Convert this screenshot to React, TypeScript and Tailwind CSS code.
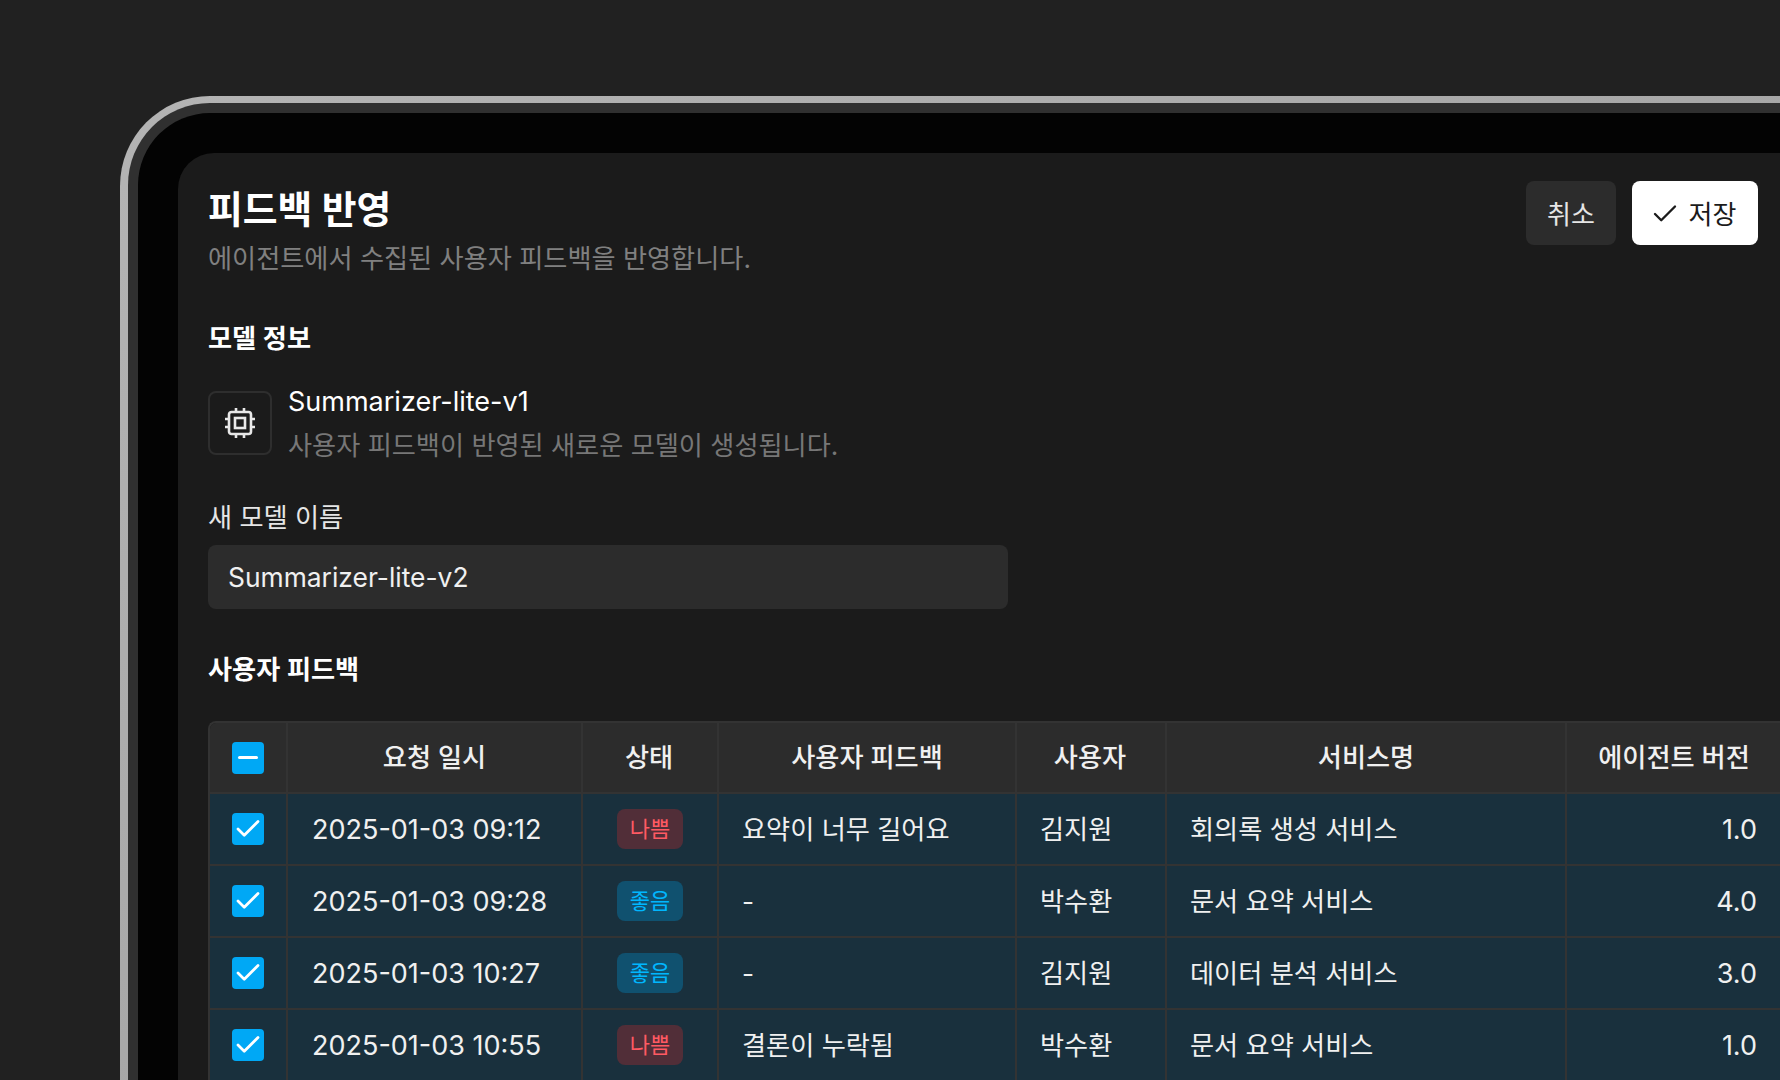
import { Check } from "lucide-react";

const rows = [
  { date: "2025-01-03 09:12", bad: true, feedback: "요약이 너무 길어요", user: "김지원", service: "회의록 생성 서비스", version: "1.0" },
  { date: "2025-01-03 09:28", bad: false, feedback: "-", user: "박수환", service: "문서 요약 서비스", version: "4.0" },
  { date: "2025-01-03 10:27", bad: false, feedback: "-", user: "김지원", service: "데이터 분석 서비스", version: "3.0" },
  { date: "2025-01-03 10:55", bad: true, feedback: "결론이 누락됨", user: "박수환", service: "문서 요약 서비스", version: "1.0" },
];

function Box({ minus }: { minus?: boolean }) {
  return (
    <div className="w-8 h-8 rounded-[4px] bg-[#00a8f5] flex items-center justify-center">
      {minus ? (
        <div className="w-[20px] h-[3px] bg-white rounded-full" />
      ) : (
        <Check className="w-[30px] h-[30px] text-white" strokeWidth={2.2} />
      )}
    </div>
  );
}

function ChipIcon() {
  return (
    <svg viewBox="0 0 32 32" className="w-8 h-8 text-[#e8e8e8]" fill="none" stroke="currentColor" strokeWidth={2.6}>
      <rect x="5" y="5" width="22" height="22" rx="2.5" />
      <rect x="11" y="11" width="10" height="10" />
      <path d="M12 1v4M20 1v4M12 27v4M20 27v4M1 12h4M1 20h4M27 12h4M27 20h4" />
    </svg>
  );
}

export default function App() {
  return (
    <div className="w-[1780px] h-[1080px] overflow-hidden bg-[#212121] pl-[120px] pt-[96px] font-['Inter','Noto_Sans_CJK_KR',sans-serif]">
      {/* device frame */}
      <div className="w-[1720px] h-[1040px] rounded-tl-[90px] bg-linear-to-br from-[#b4b4b4] to-[#9a9a9a] pl-[8px] pt-[7px]">
        <div className="w-full h-full rounded-tl-[82px] bg-[#303030] pl-[10px] pt-[10px]">
          <div className="w-full h-full rounded-tl-[72px] bg-[#030303] pl-[40px] pt-[40px]">
            <div className="w-full h-full rounded-tl-[36px] bg-[#1b1b1b] pl-[30px] pt-[32px] flex flex-col">
              <div className="flex items-start justify-between w-[1550px]">
                <div>
                  <h1 className="text-[37.8px] leading-[48px] font-semibold text-white">피드백 반영</h1>
                  <p className="mt-[7px] text-[26.2px] leading-[38px] text-[#808080]">에이전트에서 수집된 사용자 피드백을 반영합니다.</p>
                </div>
                <div className="flex gap-4 mt-[-4px]">
                  <button className="h-16 w-[90px] pt-[2px] rounded-lg bg-[#2c2c2c] text-[26px] text-[#e6e6e6]">취소</button>
                  <button className="h-16 w-[126px] pt-[2px] pr-[4px] rounded-lg bg-white text-[26px] text-[#1b1b1b] flex items-center justify-center gap-[9px]">
                    <Check className="w-[30px] h-[30px]" strokeWidth={1.9} />
                    저장
                  </button>
                </div>
              </div>

              <h2 className="mt-[43px] text-[26.2px] leading-[36px] font-semibold text-white">모델 정보</h2>
              <div className="mt-[26px] flex items-center gap-4">
                <div className="w-16 h-16 rounded-lg border-2 border-[#2e2e2e] flex items-center justify-center">
                  <ChipIcon />
                </div>
                <div className="pt-[1px] -mb-[1px]">
                  <div className="text-[27px] leading-[36px] text-white">Summarizer-lite-v1</div>
                  <div className="mt-[7px] text-[26.2px] leading-[37px] text-[#777777]">사용자 피드백이 반영된 새로운 모델이 생성됩니다.</div>
                </div>
              </div>

              <label className="mt-[37px] text-[26.2px] leading-[36px] text-[#e6e6e6]">새 모델 이름</label>
              <div className="mt-[9px] w-[800px] h-16 rounded-lg bg-[#2c2c2c] px-5 pt-[2px] flex items-center text-[26.4px] text-[#f0f0f0]">Summarizer-lite-v2</div>

              <h2 className="mt-[43px] text-[26.2px] leading-[36px] font-semibold text-white">사용자 피드백</h2>

              <div className="mt-[33px] w-[1600px] border-2 border-r-0 border-b-0 border-[#333333] rounded-tl-lg overflow-hidden">
                <div className="flex h-[71px] bg-[#2c2c2c] text-[26.2px] font-medium text-[#f0f0f0] border-b-2 border-[#333333]">
                  <div className="w-[78px] flex items-center justify-center border-r-2 border-[#333333]"><Box minus /></div>
                  <div className="w-[295px] flex items-center justify-center border-r-2 border-[#333333]">요청 일시</div>
                  <div className="w-[136px] pr-[2px] flex items-center justify-center border-r-2 border-[#333333]">상태</div>
                  <div className="w-[298px] flex items-center justify-center border-r-2 border-[#333333]">사용자 피드백</div>
                  <div className="w-[150px] pr-[2px] flex items-center justify-center border-r-2 border-[#333333]">사용자</div>
                  <div className="w-[400px] flex items-center justify-center border-r-2 border-[#333333]">서비스명</div>
                  <div className="w-[214px] flex items-center justify-center">에이전트 버전</div>
                </div>
                {rows.map((r) => (
                  <div key={r.date} className="flex h-[72px] bg-[#19303d] text-[26.2px] text-[#f0f0f0] border-b-2 border-[#333333]">
                    <div className="w-[78px] flex items-center justify-center border-r-2 border-[#333333]"><Box /></div>
                    <div className="w-[295px] flex items-center pl-6 pt-[2px] text-[27px] border-r-2 border-[#333333]">{r.date}</div>
                    <div className="w-[136px] flex items-center justify-center border-r-2 border-[#333333]">
                      <span className={r.bad ? "w-[66px] h-10 rounded-lg flex items-center justify-center text-[22px] bg-[#512e38] text-[#ff5a63]" : "w-[66px] h-10 rounded-lg flex items-center justify-center text-[22px] bg-[#10516f] text-[#00b7ff]"}>
                        {r.bad ? "나쁨" : "좋음"}
                      </span>
                    </div>
                    <div className="w-[298px] flex items-center pl-[23px] pt-[2px] border-r-2 border-[#333333]">{r.feedback}</div>
                    <div className="w-[150px] flex items-center pl-[23px] pt-[2px] border-r-2 border-[#333333]">{r.user}</div>
                    <div className="w-[400px] flex items-center pl-[23px] pt-[2px] border-r-2 border-[#333333]">{r.service}</div>
                    <div className="w-[214px] flex items-center justify-end pr-6 pt-[2px] text-[27px]">{r.version}</div>
                  </div>
                ))}
              </div>
            </div>
          </div>
        </div>
      </div>
    </div>
  );
}
